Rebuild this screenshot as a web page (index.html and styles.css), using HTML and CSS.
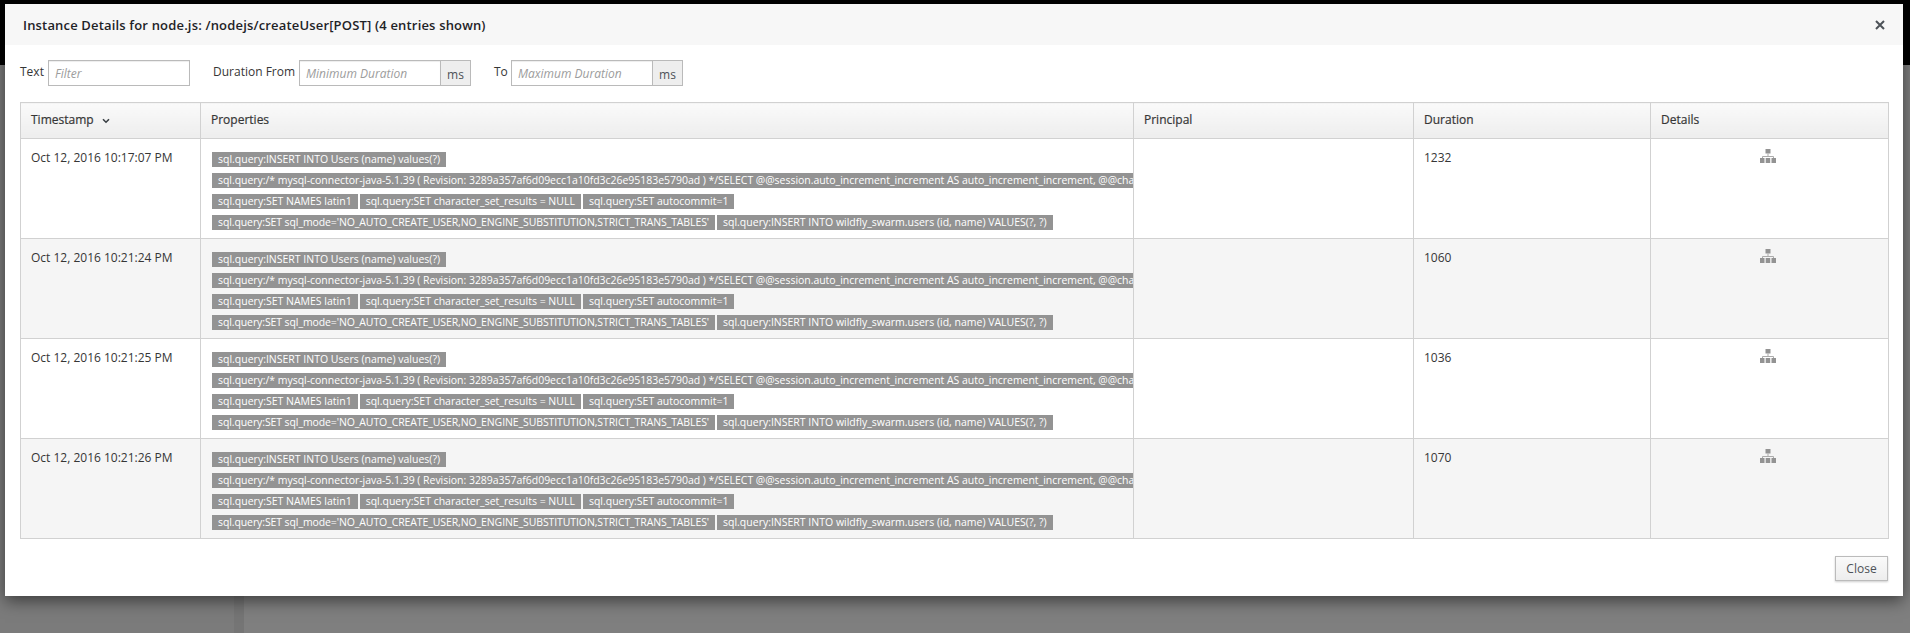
FILE: index.html
```html
<!DOCTYPE html>
<html lang="en">
<head>
<meta charset="utf-8">
<title>Instance Details</title>
<link rel="stylesheet" href="styles.css">
</head>
<body>
<div class="backdrop">
  <div class="topbar"></div>
  <div class="under"><div class="side"></div><div class="rail"></div><div class="main"></div></div>
</div>
<div class="modal">
  <header class="modal-head">
    <h4 class="modal-title">Instance Details for node.js: /nodejs/createUser[POST] (4 entries shown)</h4>
    <svg class="close-x" viewBox="0 0 10 10" width="10" height="10"><path d="M1 1L9 9M9 1L1 9" stroke="#4d5258" stroke-width="2" fill="none"/></svg>
  </header>
  <div class="modal-body">
    <form class="filters">
      <label class="f-label f-text">Text</label>
      <input class="f-input f-input-text" placeholder="Filter">
      <label class="f-label f-from">Duration From</label>
      <div class="group"><input class="f-input f-input-dur" placeholder="Minimum Duration"><span class="addon">ms</span></div>
      <label class="f-label f-to">To</label>
      <div class="group"><input class="f-input f-input-dur" placeholder="Maximum Duration"><span class="addon">ms</span></div>
    </form>
    <table class="grid">
      <colgroup><col class="c1"><col class="c2"><col class="c3"><col class="c4"><col class="c5"></colgroup>
      <thead>
        <tr><th>Timestamp <svg class="caret" viewBox="0 0 8 6" width="8" height="6"><path d="M1 1.2L4 4.2L7 1.2" stroke="#393f44" stroke-width="1.6" fill="none"/></svg></th><th>Properties</th><th>Principal</th><th>Duration</th><th>Details</th></tr>
      </thead>
      <tbody>
        <tr>
          <td>Oct 12, 2016 10:17:07 PM</td>
          <td class="props">
            <div class="tags"><span class="tag">sql.query:INSERT INTO Users (name) values(?)</span></div>
            <div class="tags tags-clip"><span class="tag tag-long">sql.query:/* mysql-connector-java-5.1.39 ( Revision: 3289a357af6d09ecc1a10fd3c26e95183e5790ad ) */SELECT @@session.auto_increment_increment AS auto_increment_increment, @@cha</span></div>
            <div class="tags"><span class="tag">sql.query:SET NAMES latin1</span><span class="tag">sql.query:SET character_set_results = NULL</span><span class="tag">sql.query:SET autocommit=1</span></div>
            <div class="tags"><span class="tag tag-caps">sql.query:SET sql_mode='NO_AUTO_CREATE_USER,NO_ENGINE_SUBSTITUTION,STRICT_TRANS_TABLES'</span><span class="tag">sql.query:INSERT INTO wildfly_swarm.users (id, name) VALUES(?, ?)</span></div>
          </td>
          <td></td><td>1232</td>
          <td class="icon-cell"><svg class="tree" viewBox="0 0 16 14" width="16" height="14"><use href="#sitemap"/></svg></td>
        </tr>
        <tr>
          <td>Oct 12, 2016 10:21:24 PM</td>
          <td class="props">
            <div class="tags"><span class="tag">sql.query:INSERT INTO Users (name) values(?)</span></div>
            <div class="tags tags-clip"><span class="tag tag-long">sql.query:/* mysql-connector-java-5.1.39 ( Revision: 3289a357af6d09ecc1a10fd3c26e95183e5790ad ) */SELECT @@session.auto_increment_increment AS auto_increment_increment, @@cha</span></div>
            <div class="tags"><span class="tag">sql.query:SET NAMES latin1</span><span class="tag">sql.query:SET character_set_results = NULL</span><span class="tag">sql.query:SET autocommit=1</span></div>
            <div class="tags"><span class="tag tag-caps">sql.query:SET sql_mode='NO_AUTO_CREATE_USER,NO_ENGINE_SUBSTITUTION,STRICT_TRANS_TABLES'</span><span class="tag">sql.query:INSERT INTO wildfly_swarm.users (id, name) VALUES(?, ?)</span></div>
          </td>
          <td></td><td>1060</td>
          <td class="icon-cell"><svg class="tree" viewBox="0 0 16 14" width="16" height="14"><use href="#sitemap"/></svg></td>
        </tr>
        <tr>
          <td>Oct 12, 2016 10:21:25 PM</td>
          <td class="props">
            <div class="tags"><span class="tag">sql.query:INSERT INTO Users (name) values(?)</span></div>
            <div class="tags tags-clip"><span class="tag tag-long">sql.query:/* mysql-connector-java-5.1.39 ( Revision: 3289a357af6d09ecc1a10fd3c26e95183e5790ad ) */SELECT @@session.auto_increment_increment AS auto_increment_increment, @@cha</span></div>
            <div class="tags"><span class="tag">sql.query:SET NAMES latin1</span><span class="tag">sql.query:SET character_set_results = NULL</span><span class="tag">sql.query:SET autocommit=1</span></div>
            <div class="tags"><span class="tag tag-caps">sql.query:SET sql_mode='NO_AUTO_CREATE_USER,NO_ENGINE_SUBSTITUTION,STRICT_TRANS_TABLES'</span><span class="tag">sql.query:INSERT INTO wildfly_swarm.users (id, name) VALUES(?, ?)</span></div>
          </td>
          <td></td><td>1036</td>
          <td class="icon-cell"><svg class="tree" viewBox="0 0 16 14" width="16" height="14"><use href="#sitemap"/></svg></td>
        </tr>
        <tr>
          <td>Oct 12, 2016 10:21:26 PM</td>
          <td class="props">
            <div class="tags"><span class="tag">sql.query:INSERT INTO Users (name) values(?)</span></div>
            <div class="tags tags-clip"><span class="tag tag-long">sql.query:/* mysql-connector-java-5.1.39 ( Revision: 3289a357af6d09ecc1a10fd3c26e95183e5790ad ) */SELECT @@session.auto_increment_increment AS auto_increment_increment, @@cha</span></div>
            <div class="tags"><span class="tag">sql.query:SET NAMES latin1</span><span class="tag">sql.query:SET character_set_results = NULL</span><span class="tag">sql.query:SET autocommit=1</span></div>
            <div class="tags"><span class="tag tag-caps">sql.query:SET sql_mode='NO_AUTO_CREATE_USER,NO_ENGINE_SUBSTITUTION,STRICT_TRANS_TABLES'</span><span class="tag">sql.query:INSERT INTO wildfly_swarm.users (id, name) VALUES(?, ?)</span></div>
          </td>
          <td></td><td>1070</td>
          <td class="icon-cell"><svg class="tree" viewBox="0 0 16 14" width="16" height="14"><use href="#sitemap"/></svg></td>
        </tr>
      </tbody>
    </table>
  </div>
  <footer class="modal-foot"><button class="btn" type="button">Close</button></footer>
</div>
<svg class="defs" width="0" height="0"><defs><g id="sitemap"><rect x="5.5" y="0" width="5" height="4.5" fill="#939393"/><path d="M8 4.5V7.5M2.5 9.5V7.5H13.5V9.5" stroke="#ababab" stroke-width="1" fill="none"/><rect x="0" y="9" width="4.5" height="5" fill="#939393"/><rect x="5.7" y="9" width="4.5" height="5" fill="#939393"/><rect x="11.5" y="9" width="4.5" height="5" fill="#939393"/></g></defs></svg>
</body>
</html>
```

FILE: styles.css
```css
html, body { margin: 0; padding: 0; height: 100%; overflow: hidden; }
body { font-family: "Open Sans", "Liberation Sans", sans-serif; font-size: 12px; color: #363636; background: #7b7b7b; }

.backdrop { height: 633px; display: flex; flex-direction: column; }
.topbar { height: 65px; background: #000; flex: none; }
.under { flex: 1; display: flex; background: #7b7b7b; }
.side { width: 234px; background: #7b7b7b; }
.rail { width: 10px; background: #757575; }
.main { flex: 1; background: #7f7f7f; }

.modal { position: absolute; left: 5px; top: 4px; width: 1898px; height: 592px; background: #fff; box-shadow: 0 5px 15px rgba(0,0,0,.5); }
.modal-head { height: 41px; background: #f7f7f7; display: flex; align-items: center; justify-content: space-between; padding: 0 18px; box-sizing: border-box; }
.modal-title { margin: 0; font-size: 13px; font-weight: 600; color: #1f2327; line-height: 18px; letter-spacing: .17px; }

.modal-body { padding: 15px 15px 0; }
.filters { display: flex; align-items: flex-start; height: 26px; margin-bottom: 16px; }
.f-label { line-height: 24px; color: #363636; }
.f-text { width: 28px; }
.f-from { margin-left: 23px; width: 86px; }
.f-to { margin-left: 23px; width: 17px; }
.f-input { box-sizing: border-box; height: 26px; border: 1px solid #bababa; font-family: inherit; font-size: 12px; padding: 2px 6px; margin: 0; outline: 0; background: #fff; box-shadow: inset 0 1px 1px rgba(0,0,0,.075); }
.f-input::placeholder { color: #9c9c9c; font-style: italic; opacity: 1; }
.f-input-text { width: 142px; }
.f-input-dur { width: 142px; }
.group { display: flex; }
.addon { box-sizing: border-box; width: 31px; height: 26px; margin-left: -1px; border: 1px solid #bababa; background: #eee; text-align: center; line-height: 27px; color: #4d5258; }

.grid { border-collapse: collapse; table-layout: fixed; width: 1868px; }
.c1 { width: 180px; } .c2 { width: 933px; } .c3 { width: 280px; } .c4 { width: 237px; } .c5 { width: 238px; }
.grid th, .grid td { border: 1px solid #d1d1d1; padding: 0 10px; vertical-align: top; text-align: left; }
.grid th { height: 36px; box-sizing: border-box; background: linear-gradient(#fafafa, #ededed); font-weight: 400; -webkit-text-stroke: .2px #363636; vertical-align: middle; padding-bottom: 2px; color: #363636; }
.grid td { height: 100px; box-sizing: border-box; padding-top: 10px; line-height: 18px; }
.grid tbody tr:nth-child(even) td { background: #f5f5f5; }
.caret { margin-left: 5px; }
.grid td.props { padding: 13px 0 0 11px; }
.tags { display: flex; height: 15px; margin-bottom: 6px; white-space: nowrap; }
.tags-clip { overflow: hidden; }
.tag { flex: none; height: 15px; padding: 0 6px; margin-right: 2px; background: #939393; color: #fff; font-size: 10.5px; line-height: 15px; }
.tag-long { letter-spacing: -.035px; margin-right: 0; }
.tag-caps { letter-spacing: -.1px; }
.grid td.icon-cell { padding-right: 13px; }
.tree { display: block; margin: 0 auto; }
.defs { position: absolute; }

.modal-foot { display: flex; justify-content: flex-end; padding: 17px 15px 0; }
.btn { width: 53px; height: 25px; box-sizing: border-box; padding: 0; font-family: inherit; font-size: 12px; color: #4d5258; background: linear-gradient(#fafafa, #ededed); border: 1px solid #bbb; box-shadow: 0 1px 2px rgba(0,0,0,.2); }
```
